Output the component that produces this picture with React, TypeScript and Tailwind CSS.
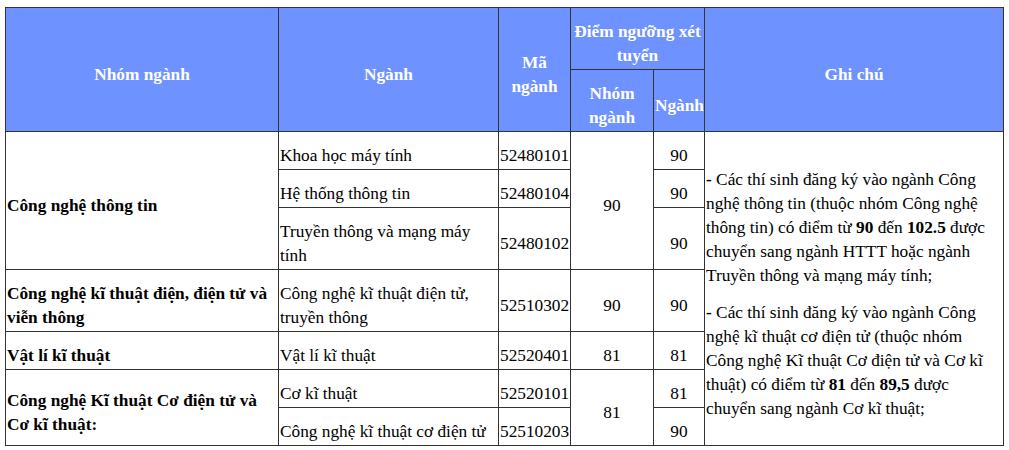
const th = 'border border-[#333] bg-[#6e92ff] text-white font-bold text-center align-middle px-px pt-[12px] pb-px';
const td = 'border border-[#333] align-middle px-px pt-[12px] pb-px';

type Row = {
  group?: { text: React.ReactNode; span: number };
  major: React.ReactNode;
  code: string;
  groupScore?: { value: string; span: number };
  score: string;
};

const rows: Row[] = [
  {
    group: { text: 'Công nghệ thông tin', span: 3 },
    major: 'Khoa học máy tính',
    code: '52480101',
    groupScore: { value: '90', span: 3 },
    score: '90',
  },
  { major: 'Hệ thống thông tin', code: '52480104', score: '90' },
  { major: 'Truyền thông và mạng máy tính', code: '52480102', score: '90' },
  {
    group: { text: 'Công nghệ kĩ thuật điện, điện tử và viễn thông', span: 1 },
    major: 'Công nghệ kĩ thuật điện tử, truyền thông',
    code: '52510302',
    groupScore: { value: '90', span: 1 },
    score: '90',
  },
  {
    group: { text: 'Vật lí kĩ thuật', span: 1 },
    major: 'Vật lí kĩ thuật',
    code: '52520401',
    groupScore: { value: '81', span: 1 },
    score: '81',
  },
  {
    group: { text: 'Công nghệ Kĩ thuật Cơ điện tử và Cơ kĩ thuật:', span: 2 },
    major: 'Cơ kĩ thuật',
    code: '52520101',
    groupScore: { value: '81', span: 2 },
    score: '81',
  },
  { major: 'Công nghệ kĩ thuật cơ điện tử', code: '52510203', score: '90' },
];

const Notes = () => (
  <div>
    <p className="mb-[13px]">
      <b>-</b> Các thí sinh đăng ký vào ngành Công nghệ thông tin (thuộc nhóm Công nghệ thông tin) có điểm từ{' '}
      <b>90</b> đến <b>102.5</b> được chuyển sang ngành HTTT hoặc ngành Truyền thông và mạng máy tính;
    </p>
    <p>
      <b>-</b> Các thí sinh đăng ký vào ngành Công nghệ kĩ thuật cơ điện tử (thuộc nhóm Công nghệ Kĩ thuật Cơ
      điện tử và Cơ kĩ thuật) có điểm từ <b>81</b> đến <b>89,5</b> được chuyển sang ngành Cơ kĩ thuật;
    </p>
  </div>
);

export default function App() {
  return (
    <div className="w-[1009px] h-[450px] bg-white pt-[7px] pl-[5px] overflow-hidden font-['Liberation_Serif','Times_New_Roman',serif]">
      <table className="table-fixed border-collapse w-[999px] text-black text-[17.3px] leading-[24px] font-['Liberation_Serif','Times_New_Roman',serif]">
        <colgroup>
          <col className="w-[273px]" />
          <col className="w-[220px]" />
          <col className="w-[72px]" />
          <col className="w-[83px]" />
          <col className="w-[51px]" />
          <col className="w-[299px]" />
        </colgroup>
        <thead>
          <tr>
            <th rowSpan={2} className={th}>Nhóm ngành</th>
            <th rowSpan={2} className={th}>Ngành</th>
            <th rowSpan={2} className={th}>Mã ngành</th>
            <th colSpan={2} className={th}>Điểm ngưỡng xét tuyển</th>
            <th rowSpan={2} className={th}>Ghi chú</th>
          </tr>
          <tr>
            <th className={th}>Nhóm ngành</th>
            <th className={th}>Ngành</th>
          </tr>
        </thead>
        <tbody>
          {rows.map((r, i) => (
            <tr key={r.code}>
              {r.group && (
                <td rowSpan={r.group.span} className={`${td} font-bold`}>
                  {r.group.text}
                </td>
              )}
              <td className={td}>{r.major}</td>
              <td className={td}>{r.code}</td>
              {r.groupScore && (
                <td rowSpan={r.groupScore.span} className={`${td} text-center`}>
                  {r.groupScore.value}
                </td>
              )}
              <td className={`${td} text-center`}>{r.score}</td>
              {i === 0 && (
                <td rowSpan={rows.length} className={td}>
                  <Notes />
                </td>
              )}
            </tr>
          ))}
        </tbody>
      </table>
    </div>
  );
}
